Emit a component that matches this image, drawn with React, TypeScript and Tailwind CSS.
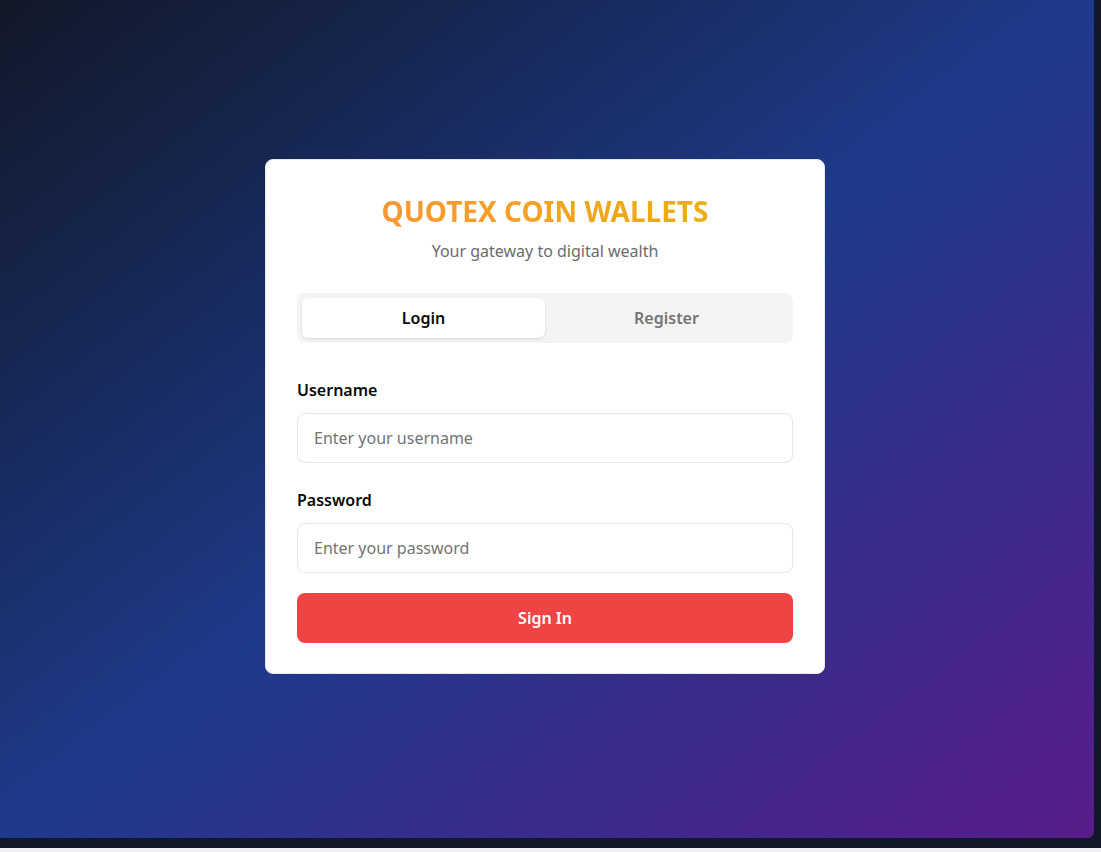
import { useState } from "react";

const font = { fontFamily: '"Segoe UI", "Noto Sans", sans-serif' };

export default function App() {
  const [tab, setTab] = useState<"login" | "register">("login");

  return (
    <div className="w-[1101px] h-[852px] bg-[#eef0f3] overflow-hidden" style={font}>
      <div className="h-[848px] bg-[#111827] pr-[7px] pb-[10px]">
        <div className="h-full rounded-br-md bg-[linear-gradient(to_bottom_right,#111827,#1e3a8a,#581c87)] flex items-center justify-center pr-[4px] pb-[6px]">
          <div className="w-[560px] bg-white rounded-lg border border-[#e5e7eb] px-[31px] pt-[31px] pb-[30px]">
            <h1 className="text-[28px] leading-10 font-bold text-center bg-[linear-gradient(to_right,#fb923c,#eab308)] bg-clip-text text-transparent">
              QUOTEX COIN WALLETS
            </h1>
            <p className="mt-2 text-base leading-6 text-center text-[#6b6b70]">
              Your gateway to digital wealth
            </p>

            {/* Tabs */}
            <div className="mt-[30px] grid grid-cols-2 p-[5px] bg-[#f4f4f3] rounded-lg">
              <button
                onClick={() => setTab("login")}
                className={
                  tab === "login"
                    ? "h-10 rounded-md bg-white shadow-sm text-base font-semibold text-[#0a0a0a]"
                    : "h-10 rounded-md text-base font-semibold text-[#737373]"
                }
              >
                Login
              </button>
              <button
                onClick={() => setTab("register")}
                className={
                  tab === "register"
                    ? "h-10 rounded-md bg-white shadow-sm text-base font-semibold text-[#0a0a0a]"
                    : "h-10 rounded-md text-base font-semibold text-[#737373]"
                }
              >
                Register
              </button>
            </div>

            {/* Form */}
            <form className="mt-[35px]" onSubmit={(e) => e.preventDefault()}>
              <label className="block text-base leading-6 font-semibold text-[#0a0a0a]">Username</label>
              <input
                type="text"
                placeholder="Enter your username"
                className="mt-[11px] w-full h-[50px] px-4 border border-[#e5e5e5] rounded-lg text-base placeholder:text-[#737373] focus:outline-none"
              />
              <label className="mt-[25px] block text-base leading-6 font-semibold text-[#0a0a0a]">Password</label>
              <input
                type="password"
                placeholder="Enter your password"
                className="mt-[11px] w-full h-[50px] px-4 border border-[#e5e5e5] rounded-lg text-base placeholder:text-[#737373] focus:outline-none"
              />
              <button
                type="submit"
                className="mt-5 w-full h-[50px] rounded-lg bg-[#ef4444] text-white text-base font-semibold"
              >
                Sign In
              </button>
            </form>
          </div>
        </div>
      </div>
    </div>
  );
}
